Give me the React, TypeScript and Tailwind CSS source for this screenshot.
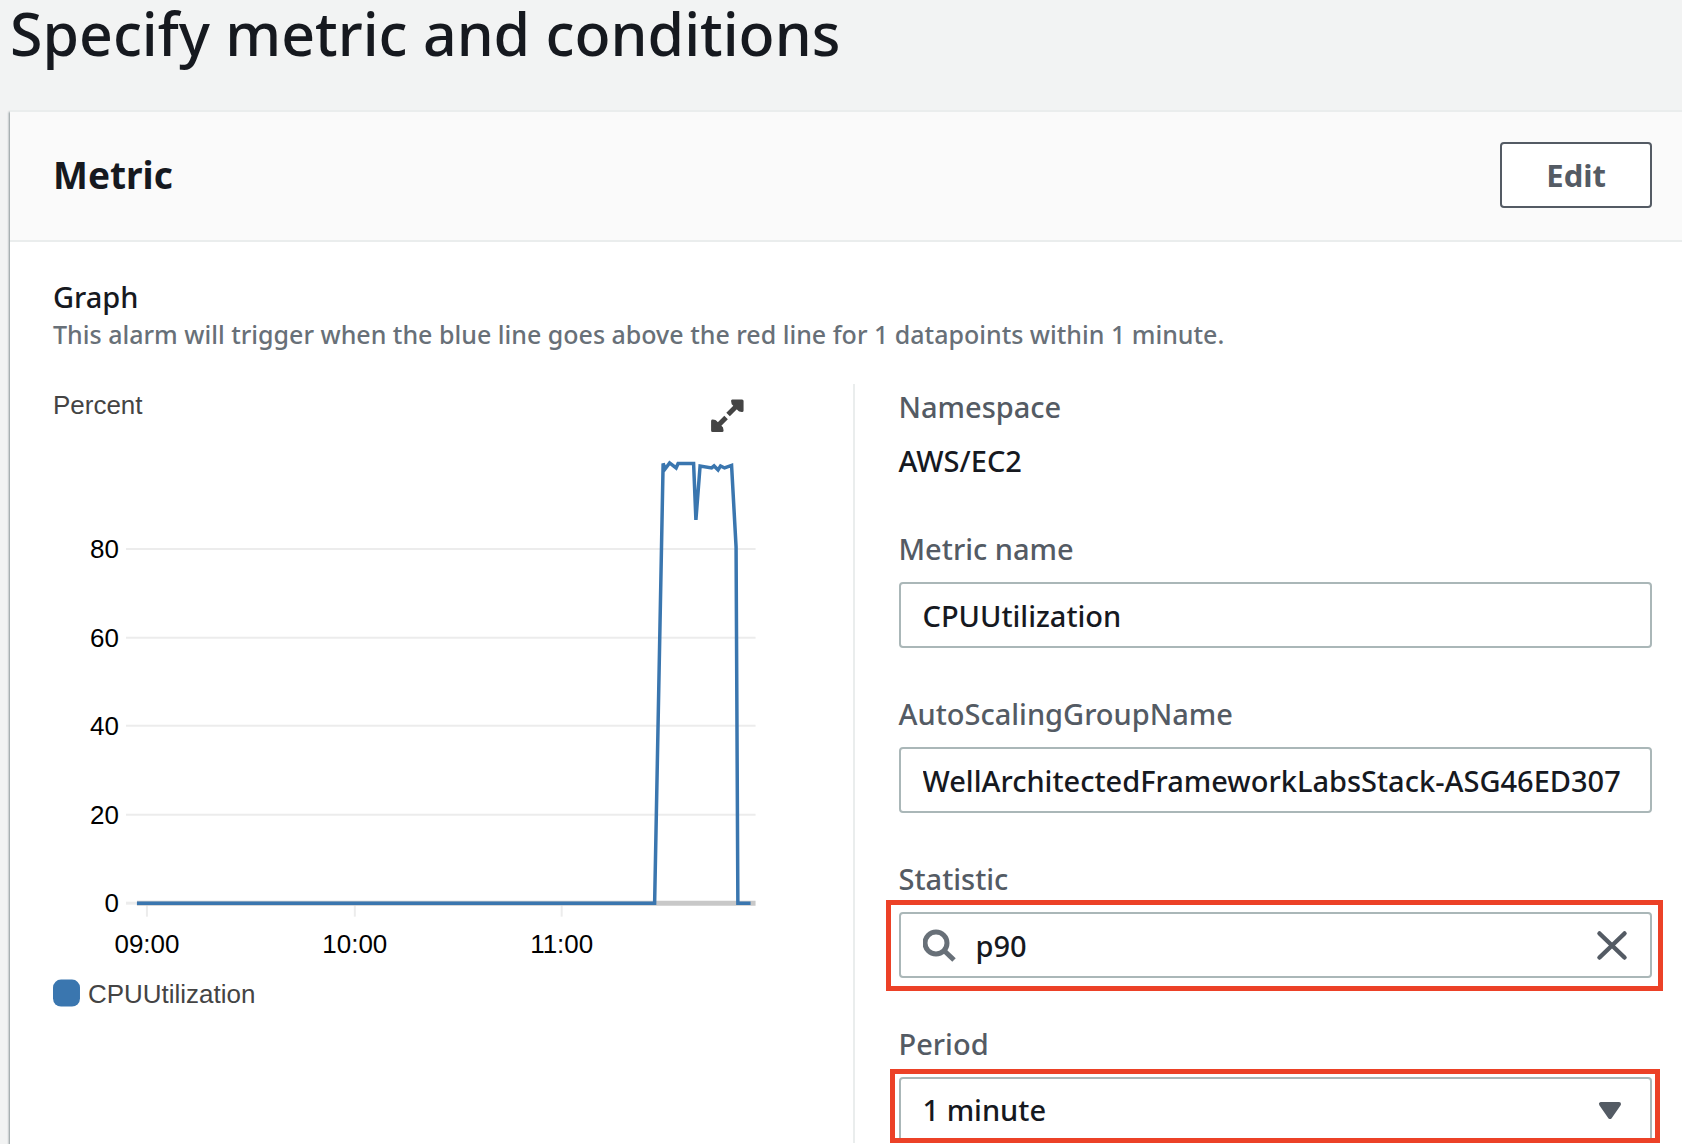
import { useState } from "react";
import type { ReactNode } from "react";

const GRID = [
  { label: "80", y: 165 },
  { label: "60", y: 254 },
  { label: "40", y: 342 },
  { label: "20", y: 431 },
];

const HOURS = [
  { label: "09:00", x: 93 },
  { label: "10:00", x: 301 },
  { label: "11:00", x: 508 },
];

const SERIES =
  "83,519.5 601,519.5 609.5,79.5 611.5,85 616,79 622.5,84 624.5,79.5 640,79.5 642.3,136 646.5,82 658,84 660.5,82 664.5,86 667,82 671,84 678,81.5 682.5,163 684.3,519.5 697,519.5";

const CONTROL =
  "h-[66px] w-full rounded-[4px] border-2 border-[#aab7b8] bg-white px-[22px] text-[29px] text-[#16191f] outline-none";

function UsageChart() {
  return (
    <svg viewBox="-1 0 800 640" className="block h-auto w-full" role="img" aria-label="CPUUtilization, percent">
      <g fontFamily="'Liberation Sans', Arial, sans-serif" fontSize="26">
        <text x="-1" y="30" fill="#444">Percent</text>
        <g fill="#444" stroke="#444">
          <path d="M679 17 L688.500 17 V26.500 L686 26 L679.500 19.500 Z" strokeWidth="3" strokeLinejoin="round" />
          <path d="M659 37 V46.500 H668.500 L668 44 L661.500 37.500 Z" strokeWidth="3" strokeLinejoin="round" />
          <path d="M674.500 30.500 L685 20 M662.500 43.500 L672.500 33.500" strokeWidth="5" />
        </g>
        <g stroke="#ececec" strokeWidth="2">
          {GRID.map((g) => (
            <path key={g.label} d={`M72 ${g.y} H702`} />
          ))}
          <path d="M72 519.500 H83" strokeWidth="3" />
          {HOURS.map((h) => (
            <path key={h.label} d={`M${h.x} 521 V533`} />
          ))}
        </g>
        <g fill="#000">
          {GRID.map((g) => (
            <text key={g.label} x="65" y={g.y + 9} textAnchor="end">{g.label}</text>
          ))}
          <text x="65" y="528" textAnchor="end">0</text>
          {HOURS.map((h) => (
            <text key={h.label} x={h.x} y="569" textAnchor="middle">{h.label}</text>
          ))}
        </g>
        <path d="M83 519.500 H702" stroke="#c8c8c8" strokeWidth="5" />
        <polyline points={SERIES} fill="none" stroke="#3a76af" strokeWidth="3.500" />
        <rect x="-1" y="596" width="27" height="27" rx="8" fill="#3a76af" />
        <text x="34" y="619" fill="#444">CPUUtilization</text>
      </g>
    </svg>
  );
}

function Field({ id, label, children }: { id: string; label: string; children: ReactNode }) {
  return (
    <div className="flex flex-col gap-[13px]">
      <label htmlFor={id} className="text-[29px] leading-10 text-[#545b64]">{label}</label>
      {children}
    </div>
  );
}

export default function App() {
  const [statistic, setStatistic] = useState("p90");
  return (
    <main className="flex h-screen flex-col overflow-hidden bg-[#f2f3f3] pl-2.5 font-['Noto_Sans',sans-serif] font-medium text-[#16191f]">
      <h1 className="h-[110px] shrink-0 text-[59px] leading-[66px]">Specify metric and conditions</h1>
      <section className="flex-1 border-t-2 border-[#eaeded] bg-white shadow-[-1px_2px_2px_rgba(0,28,36,0.45)]">
        <header className="flex items-center justify-between border-b-2 border-[#eaeded] bg-[#fafafa] pt-[30px] pr-[30px] pb-8 pl-[43px]">
          <h2 className="text-[37px] leading-[48px] font-bold">Metric</h2>
          <button type="button" className="h-[66px] rounded-[4px] border-2 border-[#545b64] bg-white px-11 text-[31px] font-bold text-[#545b64]">
            Edit
          </button>
        </header>
        <div className="pt-[35px] pr-[30px] pl-[43px]">
          <h3 className="text-[29px] leading-10">Graph</h3>
          <p className="text-[25px] leading-[34px] text-[#687078]">
            This alarm will trigger when the blue line goes above the red line for 1 datapoints within 1 minute.
          </p>
          <div className="mt-[33px] grid grid-cols-2">
            <UsageChart />
            <div className="flex flex-col gap-[46px] border-l-2 border-[#eaeded] pl-11">
              <dl className="flex flex-col gap-[14px] pt-[3px] pb-[2px] text-[29px] leading-10">
                <dt className="text-[#545b64]">Namespace</dt>
                <dd>AWS/EC2</dd>
              </dl>
              <Field id="metric-name" label="Metric name">
                <input id="metric-name" className={CONTROL} defaultValue="CPUUtilization" />
              </Field>
              <Field id="asg-name" label="AutoScalingGroupName">
                <input id="asg-name" className={CONTROL} defaultValue="WellArchitectedFrameworkLabsStack-ASG46ED307" />
              </Field>
              <Field id="statistic" label="Statistic">
                <div className="relative">
                  <input id="statistic" className="h-[66px] w-full rounded-[4px] border-2 border-[#aab7b8] bg-white px-[75px] text-[29px] text-[#16191f] outline-none" value={statistic} onChange={(e) => setStatistic(e.target.value)} />
                  <svg className="pointer-events-none absolute top-4 left-6 size-9" viewBox="0 0 36 36" fill="none" stroke="#687078" strokeWidth="5">
                    <circle cx="13" cy="15" r="11" />
                    <path d="M21 22.500 L31 32" />
                  </svg>
                  <button type="button" aria-label="Clear" onClick={() => setStatistic("")} className="absolute top-4 right-[22px]">
                    <svg className="size-9" viewBox="0 0 36 36" fill="none" stroke="#545b64" strokeWidth="4.500" strokeLinecap="round">
                      <path d="M5.500 5.500 L30.500 29.500 M30.500 5.500 L5.500 29.500" />
                    </svg>
                  </button>
                  <div className="pointer-events-none absolute -top-[12px] -right-[11px] -bottom-[13px] -left-[13px] border-5 border-[#ec4127]" />
                </div>
              </Field>
              <Field id="period" label="Period">
                <div className="relative h-[66px]">
                  <div className="h-[62px] overflow-hidden">
                    <select id="period" className="h-[66px] w-full appearance-none rounded-[4px] border-2 border-[#aab7b8] bg-white px-[22px] text-[29px] text-[#16191f] outline-none">
                      <option>1 minute</option>
                      <option>5 minutes</option>
                    </select>
                  </div>
                  <svg className="pointer-events-none absolute top-6 right-[30px] h-5 w-6" viewBox="0 0 24 20">
                    <path d="M3 3 H21 L12 16 Z" fill="#545b64" stroke="#545b64" strokeWidth="4" strokeLinejoin="round" />
                  </svg>
                  <div className="pointer-events-none absolute -top-[8px] -right-[8px] bottom-0 -left-[9px] border-5 border-[#ec4127]" />
                </div>
              </Field>
            </div>
          </div>
        </div>
      </section>
    </main>
  );
}
